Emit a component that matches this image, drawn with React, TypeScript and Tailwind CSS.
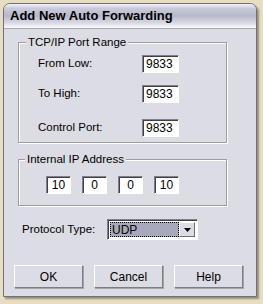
import React from 'react';

const font = { fontFamily: '"Liberation Sans", Arial, sans-serif' };

const sunken =
  'bg-white border border-t-[#808088] border-l-[#808088] border-r-white border-b-white shadow-[inset_1px_1px_0_#404048]';

const Field = ({ value }: { value: string }) => (
  <div className={`w-[37px] h-[18px] ${sunken} flex items-center pl-[3px] text-[12px] leading-none text-black`}>
    {value}
  </div>
);

const IpField = ({ value }: { value: string }) => (
  <div className={`w-[25px] h-[18px] ${sunken} flex items-center justify-center text-[12px] leading-none text-black`}>
    {value}
  </div>
);

const Btn = ({ label }: { label: string }) => (
  <button className="w-[69px] h-[23px] bg-[#dcdce4] border border-t-white border-l-white border-r-[#7c7c84] border-b-[#7c7c84] shadow-[1px_1px_0_#a4a4ac] text-[12px] text-black flex items-center justify-center">
    {label}
  </button>
);

const Row = ({ label, value, className }: { label: string; value: string; className?: string }) => (
  <div className={`flex items-center ${className ?? ''}`}>
    <span className="w-[104px] text-[11.5px] text-black">{label}</span>
    <Field value={value} />
  </div>
);

const Group = ({
  title,
  titleMl,
  className,
  bodyClass,
  children,
}: {
  title: string;
  titleMl: string;
  className: string;
  bodyClass: string;
  children: React.ReactNode;
}) => (
  <div className={`w-[209px] border border-[#9c9ca6] shadow-[inset_1px_1px_0_#fff,1px_1px_0_#fff] flex flex-col ${className}`}>
    <span className={`w-fit -mt-[7px] ${titleMl} px-[2px] bg-[#dcdce4] text-[11.5px] leading-[13px] text-black`}>
      {title}
    </span>
    <div className={`flex flex-col ${bodyClass}`}>{children}</div>
  </div>
);

export default function App() {
  return (
    <div className="w-[263px] h-[304px] bg-[#e7ddc3] pt-[3px] pl-[3px]" style={font}>
      <div className="w-[254px] h-[294px] bg-[#dcdce4] border border-[#70707c] rounded-t-[7px] shadow-[2px_2px_2px_rgba(60,50,30,0.45)] flex flex-col overflow-hidden">
        <div className="h-[25px] shrink-0 bg-[linear-gradient(to_bottom,#f4f4fa_0%,#cacadc_18%,#b8b8cc_50%,#d8d8e4_78%,#fbfbfd_100%)] border-b border-[#a4a4b0] flex items-center pl-[6px]">
          <span className="text-[13px] font-bold text-black">Add New Auto Forwarding</span>
        </div>

        <div className="flex flex-col pl-[14px]">
          <Group title="TCP/IP Port Range" titleMl="ml-[7px]" className="h-[101px] mt-[13px]" bodyClass="pl-[19px]">
            <Row label="From Low:" value="9833" className="mt-[6px]" />
            <Row label="To High:" value="9833" className="mt-[12px]" />
            <Row label="Control Port:" value="9833" className="mt-[16px]" />
          </Group>

          <Group title="Internal IP Address" titleMl="ml-[6px]" className="h-[47px] mt-[16px]" bodyClass="pl-[27px]">
            <div className="flex gap-[11px] mt-[10px]">
              <IpField value="10" />
              <IpField value="0" />
              <IpField value="0" />
              <IpField value="10" />
            </div>
          </Group>

          <div className="flex items-center mt-[13px] pl-[4px]">
            <span className="w-[85px] text-[11.5px] text-black">Protocol Type:</span>
            <div className={`w-[91px] h-[21px] ${sunken} flex items-stretch p-[2px]`}>
              <div className="flex-1 bg-[#a9a9bd] border border-dotted border-black flex items-center pl-[1px] text-[12px] leading-none text-black">
                UDP
              </div>
              <div className="w-[16px] bg-[#dcdce4] border border-t-white border-l-white border-r-[#6c6c74] border-b-[#6c6c74] flex items-center justify-center">
                <svg width="7" height="4" viewBox="0 0 7 4">
                  <path d="M0 0H7L3.5 4Z" fill="#000" />
                </svg>
              </div>
            </div>
          </div>
        </div>

        <div className="flex gap-[11px] pl-[10px] mt-[25px]">
          <Btn label="OK" />
          <Btn label="Cancel" />
          <Btn label="Help" />
        </div>
      </div>
    </div>
  );
}
